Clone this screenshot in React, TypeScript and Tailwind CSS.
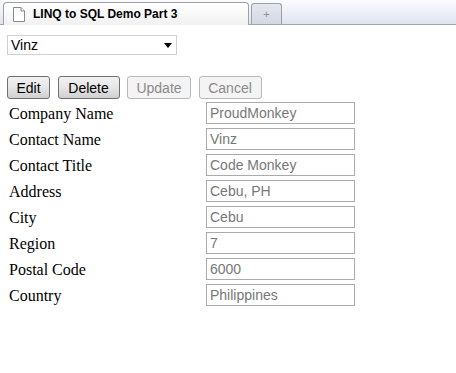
const fields = [
  ["Company Name", "ProudMonkey"],
  ["Contact Name", "Vinz"],
  ["Contact Title", "Code Monkey"],
  ["Address", "Cebu, PH"],
  ["City", "Cebu"],
  ["Region", "7"],
  ["Postal Code", "6000"],
  ["Country", "Philippines"],
];

function Btn({ label, width, disabled }: { label: string; width: string; disabled?: boolean }) {
  return (
    <button
      disabled={disabled}
      className={
        width +
        (disabled
          ? " h-[23px] rounded-[3px] border border-[#b5b9bc] bg-[#f4f4f4] text-[#8a8a8a] text-[14px] leading-none"
          : " h-[23px] rounded-[3px] border border-[#707070] bg-gradient-to-b from-[#f2f2f2] via-[#e6e6e6] to-[#cfcfcf] text-black text-[14px] leading-none")
      }
    >
      {label}
    </button>
  );
}

export default function App() {
  return (
    <div className="w-[456px] h-[373px] bg-white overflow-hidden" style={{ fontFamily: '"Liberation Sans", Arial, sans-serif' }}>
      {/* tab strip */}
      <div className="relative h-[25px] bg-gradient-to-b from-[#fbfcfe] to-[#dfe4f0] border-b border-[#a4a4a4] flex items-end pl-[3px]">
        <div className="h-[23px] w-[246px] rounded-t-[4px] border border-b-0 border-[#a0a0a0] bg-gradient-to-b from-white to-[#f1f1f1] flex items-center gap-[8px] pl-[9px] -mb-px">
          <svg width="12" height="15" viewBox="0 0 12 15">
            <path d="M0.5 0.5 H8 L11.5 4 V14.5 H0.5 Z" fill="#fff" stroke="#8a8a8a" />
            <path d="M8 0.5 V4 H11.5" fill="#eee" stroke="#8a8a8a" />
          </svg>
          <span className="text-[12px] font-bold text-black">LINQ to SQL Demo Part 3</span>
        </div>
        <div className="ml-[2px] h-[21px] w-[31px] rounded-t-[3px] border border-b-0 border-[#9aa0ab] bg-gradient-to-b from-[#e4e7ee] to-[#d3d8e3] flex items-center justify-center">
          <span className="text-[11px] text-[#8a8f99] leading-none">+</span>
        </div>
      </div>

      <div className="px-[7px] pt-[10px]">
        <div className="w-[170px] h-[20px] border border-[#d0d0d0] bg-white flex items-center justify-between pl-[3px] pr-[4px] text-[14px]">
          <span>Vinz</span>
          <svg width="8" height="5" viewBox="0 0 8 5">
            <path d="M0 0 H8 L4 5 Z" fill="#000" />
          </svg>
        </div>

        <div className="mt-[21px] flex gap-[7.5px]">
          <Btn label="Edit" width="w-[43px]" />
          <Btn label="Delete" width="w-[62px]" />
          <Btn label="Update" width="w-[64px]" disabled />
          <Btn label="Cancel" width="w-[63px]" disabled />
        </div>

        <div className="mt-[3px] flex flex-col gap-[4px]">
          {fields.map(([label, value]) => (
            <div key={label} className="flex items-center h-[22px]">
              <span className="w-[199px] pl-[2px] pt-[2px] text-[16px] text-black" style={{ fontFamily: '"Liberation Serif", "Times New Roman", serif' }}>
                {label}
              </span>
              <div className="w-[149px] h-[22px] border border-[#ababab] flex items-center pl-[3px] text-[14px] text-[#777]">
                {value}
              </div>
            </div>
          ))}
        </div>
      </div>
    </div>
  );
}
